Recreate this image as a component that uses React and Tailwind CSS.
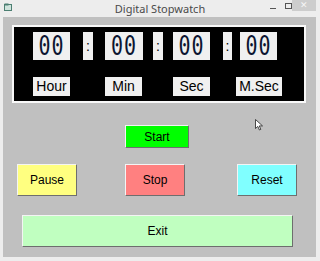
import React from 'react';

// classic win32 raised edge
const raised = 'border border-t-[#f4f4f4] border-l-[#f4f4f4] border-b-[#6e6e6e] border-r-[#6e6e6e]';

const Digit = ({ value, className }) => (
  <div className={`h-[28px] bg-[#f0f0f0] flex items-center justify-center ${className}`}>
    <span
      className="inline-block scale-y-[1.3] text-[20px] leading-none text-[#0c1530] tracking-[1px]"
      style={{ fontFamily: '"DejaVu Sans Mono", monospace' }}
    >
      {value}
    </span>
  </div>
);

const Colon = ({ className }) => (
  <div className={`h-[28px] bg-[#f0f0f0] flex items-center justify-center text-[14px] text-black ${className}`}>
    :
  </div>
);

const Label = ({ text, className }) => (
  <div className={`h-[19px] bg-[#f0f0f0] flex items-center justify-center text-[14px] text-black ${className}`}>
    {text}
  </div>
);

const Btn = ({ text, color, className }) => (
  <button className={`${raised} ${color} ${className} flex items-center justify-center text-[12px] text-black`}>
    {text}
  </button>
);

const App = () => {
  return (
    <div
      className="w-[320px] h-[261px] bg-[#ededed] flex flex-col overflow-hidden"
      style={{ fontFamily: '"Liberation Sans", Arial, sans-serif' }}
    >
      {/* title bar */}
      <div className="h-[17px] flex items-center relative shrink-0">
        <svg className="absolute left-[4px] top-[3px]" width="9" height="8" viewBox="0 0 9 8">
          <rect x="0.5" y="1.5" width="7" height="6" fill="#cfe3dc" stroke="#4c7f72" />
          <rect x="0.5" y="0.5" width="4" height="2" fill="#4c7f72" />
        </svg>
        <div
          className="flex-1 text-center text-[11px] text-[#4a4a4a] pt-[1px]"
          style={{ fontFamily: '"Noto Sans", sans-serif' }}
        >
          Digital Stopwatch
        </div>
        <div className="absolute left-[270px] top-[8px] w-[6px] h-[1px] bg-[#555]" />
        <div className="absolute left-[285px] top-[3px] w-[7px] h-[6px] border border-[#555]" />
        <div className="absolute left-[292px] top-0 w-[24px] h-[11px] bg-[#cdcdcd] flex items-center justify-center text-[9px] text-[#f5f5f5] leading-none">
          ✕
        </div>
      </div>

      {/* window body */}
      <div className="mx-[3px] mr-[4px] h-[240px] bg-[#c0c0c0] flex flex-col pt-[8px] shrink-0">
        <div className="ml-[9px] w-[294px] border-2 border-[#f8f8f8] bg-black px-[19px] pt-[5px] pb-[5px]">
          <div className="flex items-center">
            <Digit value="00" className="w-[37px]" />
            <Colon className="w-[10px] ml-[13px]" />
            <Digit value="00" className="w-[38px] ml-[12px]" />
            <Colon className="w-[10px] ml-[10px]" />
            <Digit value="00" className="w-[37px] ml-[10px]" />
            <Colon className="w-[9px] ml-[13px]" />
            <Digit value="00" className="w-[37px] ml-[8px]" />
          </div>
          <div className="flex items-center mt-[17px]">
            <Label text="Hour" className="w-[37px]" />
            <Label text="Min" className="w-[37px] ml-[35px]" />
            <Label text="Sec" className="w-[37px] ml-[31px]" />
            <Label text="M.Sec" className="w-[46px] ml-[26px]" />
          </div>
        </div>

        <div className="relative">
          <Btn text="Start" color="bg-[#00ff00]" className="ml-[122px] mt-[22px] w-[64px] h-[23px]" />
          <svg className="absolute left-[252px] top-[16px]" width="9" height="12" viewBox="0 0 9 12">
            <path d="M0.5 0.5 L0.5 9.5 L2.8 7.4 L4.4 11 L5.8 10.4 L4.3 6.9 L7.5 6.9 Z" fill="#fff" stroke="#222" strokeWidth="0.8" />
          </svg>
        </div>

        <div className="flex mt-[16px]">
          <Btn text="Pause" color="bg-[#ffff80]" className="ml-[14px] w-[60px] h-[32px]" />
          <Btn text="Stop" color="bg-[#ff8080]" className="ml-[48px] w-[60px] h-[32px]" />
          <Btn text="Reset" color="bg-[#80ffff]" className="ml-[52px] w-[60px] h-[32px]" />
        </div>

        <Btn text="Exit" color="bg-[#c0ffc0]" className="ml-[19px] mt-[19px] w-[271px] h-[32px]" />
      </div>
    </div>
  );
};

export default App;
